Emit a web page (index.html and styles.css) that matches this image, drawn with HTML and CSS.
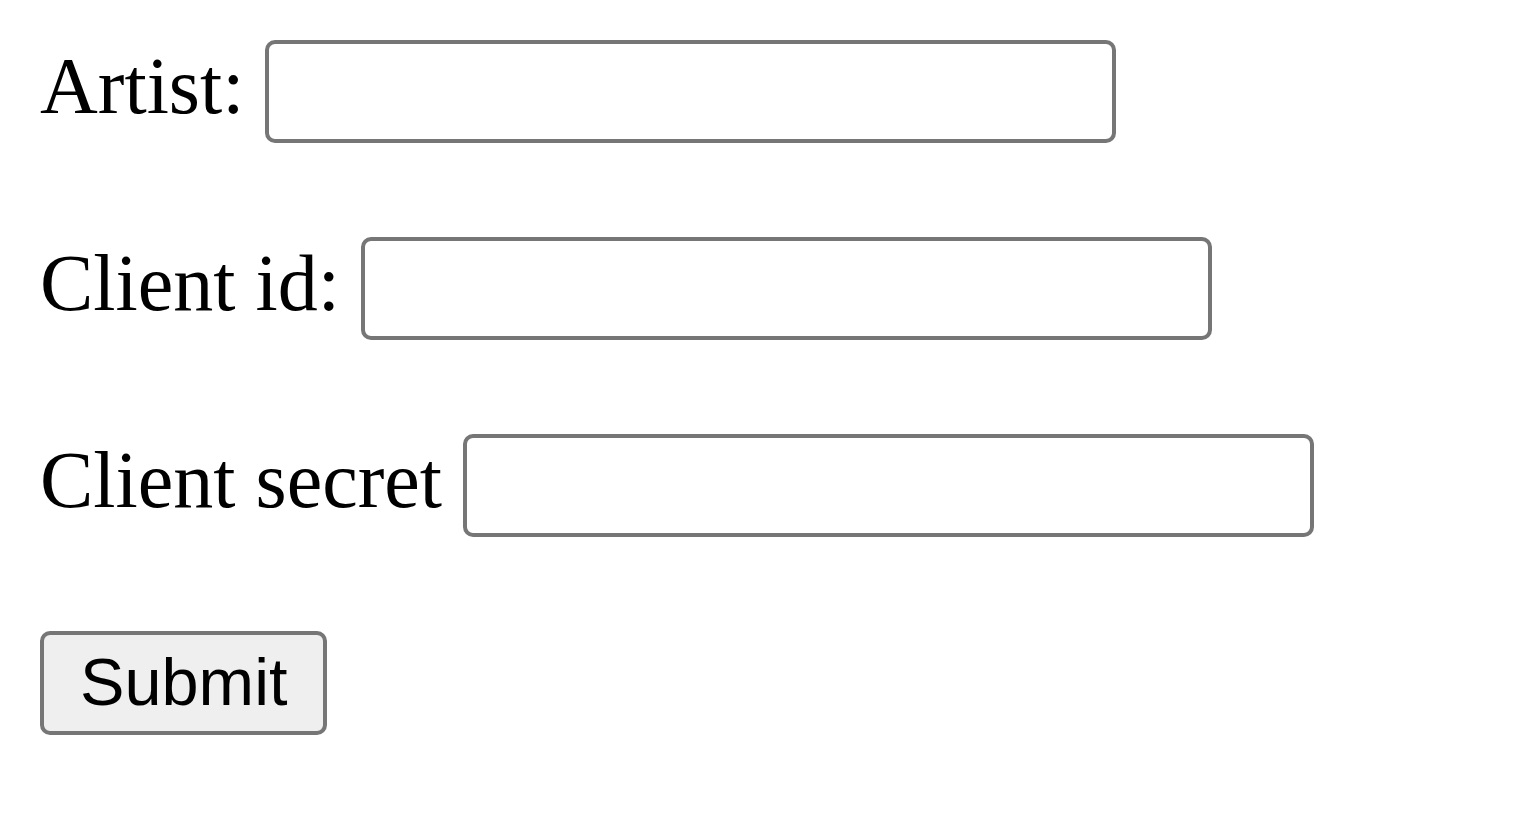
FILE: index.html
```html
<!DOCTYPE html>
<html lang="en">
<head>
    <title>Artist search</title>
    <link rel="stylesheet" href="styles.css">
</head>
<body>

    <form class="search-form">
        <div class="form-row">
            <label for="artist">Artist:</label>
            <input type="text" id="artist" class="text-input">
        </div>
        <div class="form-row">
            <label for="client-id">Client id:</label>
            <input type="text" id="client-id" class="text-input">
        </div>
        <div class="form-row">
            <label for="client-secret">Client secret</label>
            <input type="text" id="client-secret" class="text-input">
        </div>
        <div class="form-row">
            <button type="submit" class="submit-btn">Submit</button>
        </div>
    </form>

</body>
</html>
```

FILE: styles.css
```css
body {
    margin: 0;
    padding: 40px;
    background-color: white;
    font-family: "Liberation Serif", "Times New Roman", serif;
    font-size: 80px;
    color: black;
}
.search-form {
    display: flex;
    flex-direction: column;
    gap: 94px;
}
.form-row {
    display: flex;
    align-items: center;
    gap: 21px;
    height: 103px;
}
.form-row label {
    line-height: 80px;
    padding-bottom: 12px;
    white-space: nowrap;
}
.text-input {
    box-sizing: border-box;
    width: 851px;
    height: 103px;
    margin: 0;
    padding: 0 10px;
    border: 4px solid #767676;
    border-radius: 10px;
    background-color: white;
    font-family: "Liberation Sans", Arial, sans-serif;
    font-size: 66.67px;
    outline: none;
}
.submit-btn {
    box-sizing: border-box;
    height: 104px;
    margin: 0;
    padding: 0 36px 2px 36px;
    border: 4px solid #767676;
    border-radius: 10px;
    background-color: #efefef;
    color: black;
    font-family: "Liberation Sans", Arial, sans-serif;
    font-size: 66.67px;
    cursor: pointer;
}
```
